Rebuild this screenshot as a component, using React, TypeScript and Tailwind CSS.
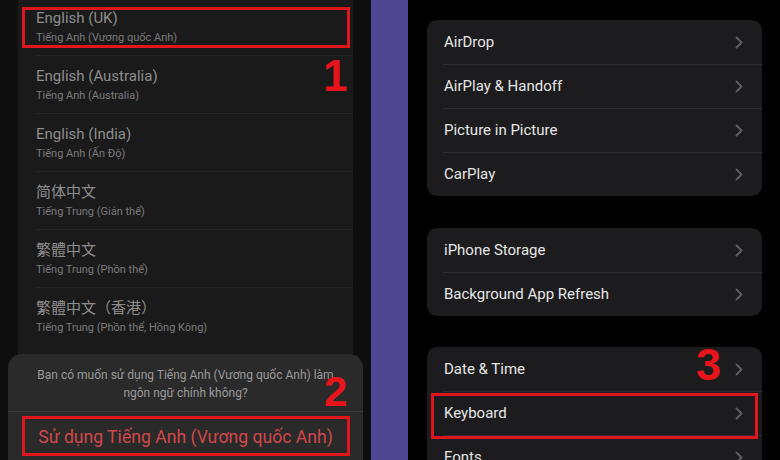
import React from "react";

const langs = [
  { title: "English (UK)", sub: "Tiếng Anh (Vương quốc Anh)" },
  { title: "English (Australia)", sub: "Tiếng Anh (Australia)" },
  { title: "English (India)", sub: "Tiếng Anh (Ấn Độ)" },
  { title: "简体中文", sub: "Tiếng Trung (Giản thể)" },
  { title: "繁體中文", sub: "Tiếng Trung (Phồn thể)" },
  { title: "繁體中文（香港）", sub: "Tiếng Trung (Phồn thể, Hồng Kông)" },
];

const groups = [
  ["AirDrop", "AirPlay & Handoff", "Picture in Picture", "CarPlay"],
  ["iPhone Storage", "Background App Refresh"],
  ["Date & Time", "Keyboard", "Fonts"],
];

function Chevron() {
  return (
    <svg width="8" height="13" viewBox="0 0 8 13" fill="none">
      <path d="M1.5 1.5l5 5-5 5" stroke="#5c5c61" strokeWidth="2" strokeLinecap="round" strokeLinejoin="round" />
    </svg>
  );
}

export default function App() {
  return (
    <div
      className="w-[780px] h-[460px] flex overflow-hidden relative"
      style={{ fontFamily: 'Roboto, "Noto Sans CJK SC", sans-serif' }}
    >
      {/* language list + sheet */}
      <div className="w-[371px] shrink-0 bg-[#0e0e0e] relative overflow-hidden flex flex-col">
        <div className="ml-[18px] w-[335px] mt-[-2px] flex-1 bg-[#1a1a1a]">
          {langs.map((l, i) => (
            <div key={i}>
              {i > 0 && <div className="ml-[18px] h-px bg-[#242424]" />}
              <div className="pl-[18px] pt-[10px] pb-[9px]">
                <div className="text-[15px] leading-[20px] text-[#8d8d8d]">{l.title}</div>
                <div className="mt-[2px] text-[11px] leading-[16px] text-[#7a7a7a]">{l.sub}</div>
              </div>
            </div>
          ))}
        </div>

        {/* action sheet */}
        <div className="absolute left-[8px] top-[354px] w-[355px] h-[140px] rounded-t-[14px] bg-[#2a2a2a]">
          <div className="px-[22px] pt-[12px] pb-[9px] text-center text-[12px] leading-[18px] text-[#9a9a9a]">
            Bạn có muốn sử dụng Tiếng Anh (Vương quốc Anh) làm
            <br />
            ngôn ngữ chính không?
          </div>
          <div className="h-px bg-[#3c3c3c]" />
          <div className="h-[50px] flex items-center justify-center text-[17.6px] text-[#d2474c]">
            Sử dụng Tiếng Anh (Vương quốc Anh)
          </div>
        </div>

        {/* annotations */}
        <div className="absolute left-[22px] top-[7px] w-[328px] h-[41px] border-[3px] border-[#e0161e]" />
        <div className="absolute left-[323px] top-[48px] text-[44px] leading-[56px] font-black text-[#e8141c]" style={{ fontFamily: '"Liberation Sans", sans-serif' }}>1</div>
        <div className="absolute left-[22px] top-[416px] w-[328px] h-[40px] border-[3px] border-[#e0161e]" />
        <div className="absolute left-[324px] top-[366px] text-[42px] leading-[52px] font-black text-[#e8141c]" style={{ fontFamily: '"Liberation Sans", sans-serif' }}>2</div>
      </div>

      {/* purple divider */}
      <div className="w-[37px] shrink-0 bg-[#4f4791]" />

      {/* settings */}
      <div className="flex-1 bg-black pl-[19px] pr-[18px] pt-[20px] flex flex-col gap-[32px] relative">
        {groups.map((g, gi) => (
          <div key={gi} className={`rounded-[10px] bg-[#1c1c1e] overflow-hidden shrink-0 ${gi === 2 ? "-mt-[1px]" : ""}`}>
            {g.map((item, i) => (
              <div key={item}>
                {i > 0 && <div className="ml-[16px] h-px bg-[#2e2e31]" />}
                <div className={`${i > 0 ? "h-[43px]" : "h-[44px]"} pl-[17px] pr-[19px] flex items-center justify-between`}>
                  <span className="text-[15px] text-[#e6e6e6]">{item}</span>
                  <Chevron />
                </div>
              </div>
            ))}
          </div>
        ))}

        <div className="absolute left-[23px] top-[393px] w-[327px] h-[46px] border-[3px] border-[#e0161e]" />
        <div className="absolute left-[288px] top-[337px] text-[45px] leading-[56px] font-black text-[#e8141c]" style={{ fontFamily: '"Liberation Sans", sans-serif' }}>3</div>
      </div>
    </div>
  );
}
